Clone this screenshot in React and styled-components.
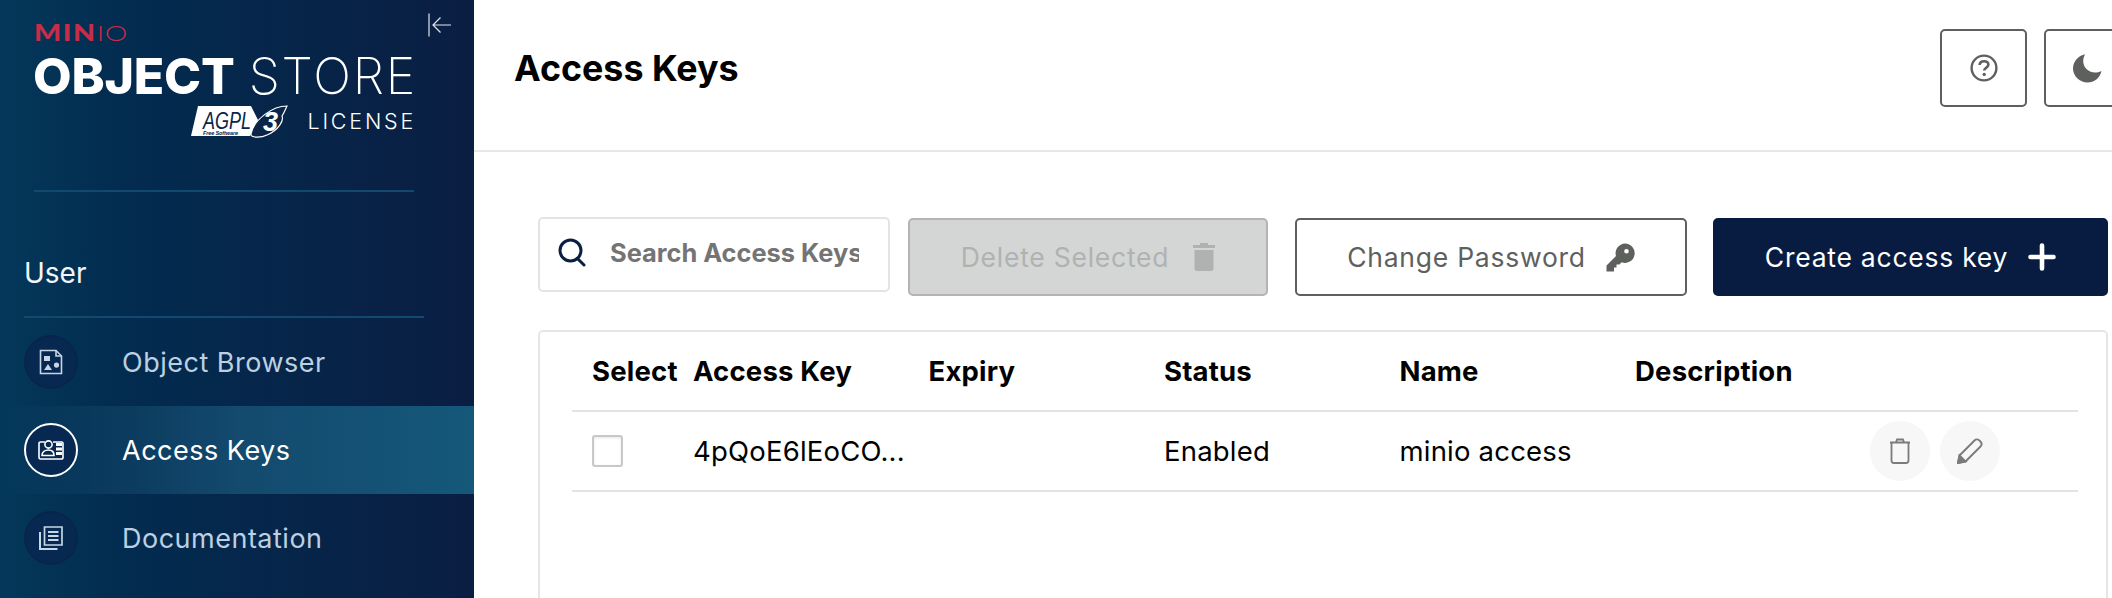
import React from "react";
import styled, { createGlobalStyle } from "styled-components";

const GlobalStyle = createGlobalStyle`
  html, body {
    margin: 0;
    padding: 0;
    background: #fff;
    overflow: hidden;
  }
  * {
    box-sizing: border-box;
  }
`;

const Page = styled.div`
  display: flex;
  width: 2112px;
  height: 598px;
  overflow: hidden;
  font-family: Inter, "Liberation Sans", sans-serif;
  font-size: 21.5px;
`;

const Sidebar = styled.aside`
  position: relative;
  flex: 0 0 474px;
  background: linear-gradient(90deg, #04385a 0%, #022c50 25%, #0a1e42 100%);
  color: #fff;
`;

const CollapseButton = styled.button`
  position: absolute;
  top: 13px;
  left: 428px;
  width: 24px;
  height: 24px;
  padding: 0;
  border: 0;
  background: none;
  color: #e2e6ec;
`;

const LogoBlock = styled.div`
  display: flex;
  flex-direction: column;
  align-items: flex-start;
  height: 190px;
  padding: 20px 0 0 34px;
`;

const BrandName = styled.div`
  display: flex;
  height: 26px;
  align-items: center;
  font-family: Lato, Inter, sans-serif;
  font-size: 22px;
  line-height: 26px;
  letter-spacing: 1.2px;
  color: #c72c48;
  transform: scaleX(1.3);
  transform-origin: left center;
`;

const BrandStrong = styled.span`
  font-weight: 900;
`;

const BrandLight = styled.span`
  font-weight: 300;
  letter-spacing: 0.5px;
`;

const ProductName = styled.div`
  width: 380px;
  margin: 8px 0 0 -1px;
  font-family: Inter, sans-serif;
  font-size: 50px;
  line-height: 44px;
  white-space: nowrap;
  letter-spacing: -0.2px;
`;

const ProductStrong = styled.span`
  font-weight: 800;
`;

const ProductLight = styled.span`
  margin-left: 14px;
  font-weight: 200;
  letter-spacing: 1.8px;
`;

const LicenseRow = styled.div`
  display: flex;
  align-items: center;
  justify-content: flex-end;
  gap: 19px;
  width: 380px;
  height: 34px;
  margin-top: 6px;
`;

const LicenseText = styled.span`
  font-family: Inter, sans-serif;
  font-size: 21.5px;
  font-weight: 300;
  letter-spacing: 2.8px;
  margin-right: -2px;
`;

const Rule = styled.div`
  height: 2px;
  background: #114a6e;
  margin-left: ${(p) => p.$left}px;
  width: ${(p) => p.$width}px;
`;

const SectionLabel = styled.div`
  height: 124px;
  padding: 64px 0 0 24px;
  line-height: 34px;
  font-size: 28px;
  font-weight: 400;
  color: #f2f5f8;
`;

const NavList = styled.nav`
  display: flex;
  flex-direction: column;
`;

const NavItem = styled.div`
  display: flex;
  align-items: center;
  gap: 44px;
  height: 88px;
  padding-left: 24px;
  font-size: 27px;
  letter-spacing: 0.5px;
  color: ${(p) => (p.$active ? "#ffffff" : "#bcd0e2")};
  background: ${(p) =>
    p.$active ? "linear-gradient(90deg, rgba(21, 88, 122, 0) 0%, #134a6e 50%, #15587a 100%)" : "none"};
`;

const NavIcon = styled.span`
  display: flex;
  align-items: center;
  justify-content: center;
  flex: 0 0 54px;
  width: 54px;
  height: 54px;
  border-radius: 50%;
  background: #072850;
  border: ${(p) => (p.$active ? "2px solid #ffffff" : "2px solid #08264d")};
  color: ${(p) => (p.$active ? "#ffffff" : "#c5d6e6")};
`;

const Main = styled.main`
  flex: 1;
  min-width: 0;
  overflow: hidden;
`;

const Header = styled.header`
  display: flex;
  align-items: flex-start;
  justify-content: space-between;
  width: 1657px;
  height: 152px;
  padding: 29px 0 0 40px;
  border-bottom: 2px solid #e7e7e7;
`;

const PageTitle = styled.h1`
  margin: 0;
  font-size: 35.8px;
  font-weight: 700;
  line-height: 78px;
  color: #000;
`;

const HeaderActions = styled.div`
  display: flex;
  flex: 0 0 auto;
  gap: 17px;
`;

const IconButton = styled.button`
  display: flex;
  align-items: center;
  justify-content: center;
  width: 87px;
  height: 78px;
  padding: 0;
  background: #fff;
  border: 2px solid #5e605e;
  border-radius: 5px;
  color: #5e605e;
`;

const Content = styled.section`
  padding: 65px 4px 0 64px;
`;

const Toolbar = styled.div`
  display: flex;
  align-items: flex-start;
`;

const SearchBox = styled.label`
  display: flex;
  align-items: center;
  flex: 0 0 352px;
  height: 75px;
  margin-right: 18px;
  padding: 0 0 4px 18px;
  border: 2px solid #e4e4e4;
  border-radius: 5px;
  color: #0b1f43;
`;

const SearchInput = styled.input`
  width: 249px;
  margin-left: 23px;
  padding: 0;
  border: 0;
  outline: 0;
  background: none;
  font-family: Inter, sans-serif;
  font-size: 25.4px;
  font-weight: 700;
  &::placeholder {
    color: #747474;
    opacity: 1;
  }
`;

const buttonColors = {
  disabled: "background: #d3d6d5; border: 2px solid #b3b4b3; color: #b0b2b1;",
  outline: "background: #fff; border: 2px solid #5e605e; color: #5e605e;",
  primary: "background: #081c42; border: 2px solid #081c42; color: #fff;",
};

const ActionButton = styled.button`
  ${(p) => buttonColors[p.$kind]}
  display: flex;
  align-items: center;
  justify-content: center;
  gap: ${(p) => p.$gap}px;
  flex: 0 0 ${(p) => p.$width}px;
  height: 78px;
  margin: 1px 0 0 ${(p) => p.$left}px;
  padding: 0;
  border-radius: 5px;
  font-family: Inter, sans-serif;
  font-size: 26.5px;
  letter-spacing: 0.75px;
`;

const TableCard = styled.div`
  height: 400px;
  margin-top: 34px;
  padding: 0 28px 0 32px;
  border: 2px solid #e6e6e6;
  border-radius: 5px;
`;

const TableRow = styled.div`
  display: grid;
  grid-template-columns: 101px repeat(5, 235.5px) 1fr;
  align-items: center;
  height: 80px;
  padding-left: 20px;
  border-bottom: 2px solid #e3e3e3;
  font-size: 27.5px;
  letter-spacing: 0.2px;
  font-weight: ${(p) => (p.$head ? 700 : 400)};
  color: #000;
`;

const Cell = styled.div`
  white-space: nowrap;
`;

const Checkbox = styled.span`
  display: block;
  width: 31px;
  height: 32px;
  border: 2px solid #c8c8c8;
  border-radius: 3px;
  background: #fff;
  box-shadow: inset 0 1px 3px rgba(0, 0, 0, 0.1);
`;

const RowActions = styled.div`
  display: flex;
  gap: 10px;
  margin-left: -1px;
`;

const RoundAction = styled.button`
  display: flex;
  align-items: center;
  justify-content: center;
  width: 60px;
  height: 60px;
  padding: 0;
  border: 0;
  border-radius: 50%;
  background: #f7f7f7;
  color: #7b7b7b;
`;

function CollapseIcon() {
  return (
    <svg width="24" height="24" viewBox="0 0 24 24" fill="none" stroke="currentColor" strokeWidth="1.2">
      <path d="M1 0.5V23.5M23 12H5.5M12.5 4.5L5 12L12.5 19.5" />
    </svg>
  );
}

function AgplBadge() {
  return (
    <svg width="97" height="33" viewBox="0 0 97 33">
      <path d="M7 1H60L67 15L59 31H0Z" fill="#fff" />
      <text x="12" y="24" fill="#0a2548" fontFamily="Liberation Sans, sans-serif" fontSize="23" fontStyle="italic" textLength="48" lengthAdjust="spacingAndGlyphs">
        AGPL
      </text>
      <text x="12" y="29.5" fill="#0a2548" fontFamily="Liberation Sans, sans-serif" fontSize="5.5" fontWeight="700" fontStyle="italic" textLength="35">
        Free Software
      </text>
      <path d="M60 29C63 14 82 1 96 1C94 5 93 8 91 11C93 15 88 25 76 30C70 33 59 33 60 29Z" fill="#0a2548" stroke="#fff" strokeWidth="1.2" />
      <text x="72" y="26" fill="#fff" fontFamily="Liberation Sans, sans-serif" fontSize="27" fontWeight="700" fontStyle="italic">
        3
      </text>
    </svg>
  );
}

function ObjectBrowserIcon() {
  return (
    <svg width="24" height="26" viewBox="0 0 24 26" fill="none" stroke="currentColor" strokeWidth="1.6">
      <path d="M1.5 1.5H17L22.5 7V24.5H1.5Z" />
      <path d="M17 1.5V7H22.5" />
      <path d="M5 7H11V12H5ZM9 15L13 21H5ZM17.5 13.5A2.6 2.6 0 1 0 17.5 18.7A2.6 2.6 0 1 0 17.5 13.5Z" fill="currentColor" stroke="none" />
    </svg>
  );
}

function AccessKeysIcon() {
  return (
    <svg width="26" height="22" viewBox="0 0 26 22" fill="none" stroke="currentColor" strokeWidth="1.6">
      <path d="M7 3H2.5A1.5 1.5 0 0 0 1 4.5V18.5A1.5 1.5 0 0 0 2.5 20H23.5A1.5 1.5 0 0 0 25 18.5V4.5A1.5 1.5 0 0 0 23.5 3H15" />
      <circle cx="10.5" cy="5.5" r="3.6" />
      <path d="M4 16.5C4 13 7 11 10.5 11C14 11 16 13 16 16.5Z" />
      <path d="M18 5.5H24M18 10H24M18 14.5H24" strokeWidth="3" />
    </svg>
  );
}

function DocumentationIcon() {
  return (
    <svg width="24" height="24" viewBox="0 0 24 24" fill="none" stroke="currentColor" strokeWidth="1.7">
      <path d="M5.5 1H23V19H5.5Z" />
      <path d="M9 6H19.5M9 10H19.5M9 14H19.5" strokeWidth="1.8" />
      <path d="M1 6V23H18.5" strokeWidth="2" />
    </svg>
  );
}

function HelpIcon() {
  return (
    <svg width="28" height="28" viewBox="0 0 28 28" fill="none" stroke="currentColor" strokeWidth="2.4">
      <circle cx="14" cy="14" r="12.4" />
      <path d="M9.6 11C9.8 8.4 11.6 7.2 14 7.2C16.6 7.2 18.4 8.6 18.4 10.8C18.4 13.6 14.2 13.6 14.2 16.6" strokeWidth="2.6" />
      <circle cx="14.2" cy="20.4" r="1.7" fill="currentColor" stroke="none" />
    </svg>
  );
}

function MoonIcon() {
  return (
    <svg width="29" height="29" viewBox="0 0 29 29" fill="currentColor">
      <path d="M12 0.3C9 6 10 12 14 15.5C18 19 23 19.5 28.5 17C27 24 21 28.5 14.5 28.5C6.5 28.5 0 22 0 14.5C0 7.5 5.5 1.5 12 0.3Z" />
    </svg>
  );
}

function SearchIcon() {
  return (
    <svg width="29" height="29" viewBox="0 0 29 29" fill="none" stroke="currentColor" strokeWidth="3">
      <circle cx="12.5" cy="12.5" r="10.5" />
      <path d="M19.5 20.5L26 27" strokeLinecap="round" />
    </svg>
  );
}

function TrashFilledIcon() {
  return (
    <svg width="22" height="28" viewBox="0 0 22 28" fill="currentColor">
      <path d="M7 0H15V2H22V5H0V2H7ZM1.5 7H20.5V25.5A2.5 2.5 0 0 1 18 28H4A2.5 2.5 0 0 1 1.5 25.5Z" />
    </svg>
  );
}

function KeyIcon() {
  return (
    <svg width="29" height="29" viewBox="0 0 29 29" fill="currentColor">
      <path
        fillRule="evenodd"
        d="M19 0.5A9.7 9.7 0 1 1 15.6 19.3L13.5 21.4H10.5V24.4H8V28.5H0.5V22.4L10 13A9.7 9.7 0 0 1 19 0.5ZM20.5 6A2.3 2.3 0 1 0 20.5 10.6A2.3 2.3 0 1 0 20.5 6Z"
      />
    </svg>
  );
}

function PlusIcon() {
  return (
    <svg width="28" height="28" viewBox="0 0 28 28" fill="none" stroke="currentColor" strokeWidth="4.6" strokeLinecap="round">
      <path d="M14 2.5V25.5M2.5 14H25.5" />
    </svg>
  );
}

function TrashOutlineIcon() {
  return (
    <svg width="22" height="26" viewBox="0 0 22 26" fill="none" stroke="currentColor" strokeWidth="1.8">
      <path d="M1 4.5H21M7 4.5L8 1.5H14L15 4.5" />
      <path d="M2.5 4.5V22.5A2.5 2.5 0 0 0 5 25H17A2.5 2.5 0 0 0 19.5 22.5V4.5" />
    </svg>
  );
}

function PencilIcon() {
  return (
    <svg width="26" height="26" viewBox="0 0 26 26" fill="none" stroke="currentColor" strokeWidth="1.9">
      <path d="M2.5 17.5L17.5 2.5C19 1 21 1 23 3C25 5 25 7 23.5 8.5L8.5 23.5L1 25Z" strokeLinejoin="round" />
      <path d="M1 25L2.5 17.5L8.5 23.5Z" fill="currentColor" />
    </svg>
  );
}

function App() {
  return (
    <Page>
      <GlobalStyle />
      <Sidebar>
        <CollapseButton aria-label="Collapse menu">
          <CollapseIcon />
        </CollapseButton>
        <LogoBlock>
          <BrandName>
            <BrandStrong>MIN</BrandStrong>
            <BrandLight>IO</BrandLight>
          </BrandName>
          <ProductName>
            <ProductStrong>OBJECT</ProductStrong>
            <ProductLight>STORE</ProductLight>
          </ProductName>
          <LicenseRow>
            <AgplBadge />
            <LicenseText>LICENSE</LicenseText>
          </LicenseRow>
        </LogoBlock>
        <Rule $left={34} $width={380} />
        <SectionLabel>User</SectionLabel>
        <Rule $left={24} $width={400} />
        <NavList>
          <NavItem>
            <NavIcon>
              <ObjectBrowserIcon />
            </NavIcon>
            Object Browser
          </NavItem>
          <NavItem $active>
            <NavIcon $active>
              <AccessKeysIcon />
            </NavIcon>
            Access Keys
          </NavItem>
          <NavItem>
            <NavIcon>
              <DocumentationIcon />
            </NavIcon>
            Documentation
          </NavItem>
        </NavList>
      </Sidebar>
      <Main>
        <Header>
          <PageTitle>Access Keys</PageTitle>
          <HeaderActions>
            <IconButton aria-label="Help">
              <HelpIcon />
            </IconButton>
            <IconButton aria-label="Dark mode">
              <MoonIcon />
            </IconButton>
          </HeaderActions>
        </Header>
        <Content>
          <Toolbar>
            <SearchBox>
              <SearchIcon />
              <SearchInput placeholder="Search Access Keys" />
            </SearchBox>
            <ActionButton $kind="disabled" $width={360} $gap={24} $left={0}>
              Delete Selected
              <TrashFilledIcon />
            </ActionButton>
            <ActionButton $kind="outline" $width={392} $gap={20} $left={27}>
              Change Password
              <KeyIcon />
            </ActionButton>
            <ActionButton $kind="primary" $width={395} $gap={20} $left={26}>
              Create access key
              <PlusIcon />
            </ActionButton>
          </Toolbar>
          <TableCard>
            <TableRow $head>
              <Cell>Select</Cell>
              <Cell>Access Key</Cell>
              <Cell>Expiry</Cell>
              <Cell>Status</Cell>
              <Cell>Name</Cell>
              <Cell>Description</Cell>
              <Cell />
            </TableRow>
            <TableRow>
              <Cell>
                <Checkbox />
              </Cell>
              <Cell>4pQoE6lEoCO...</Cell>
              <Cell />
              <Cell>Enabled</Cell>
              <Cell>minio access</Cell>
              <Cell />
              <RowActions>
                <RoundAction aria-label="Delete">
                  <TrashOutlineIcon />
                </RoundAction>
                <RoundAction aria-label="Edit">
                  <PencilIcon />
                </RoundAction>
              </RowActions>
            </TableRow>
          </TableCard>
        </Content>
      </Main>
    </Page>
  );
}

export default App;
